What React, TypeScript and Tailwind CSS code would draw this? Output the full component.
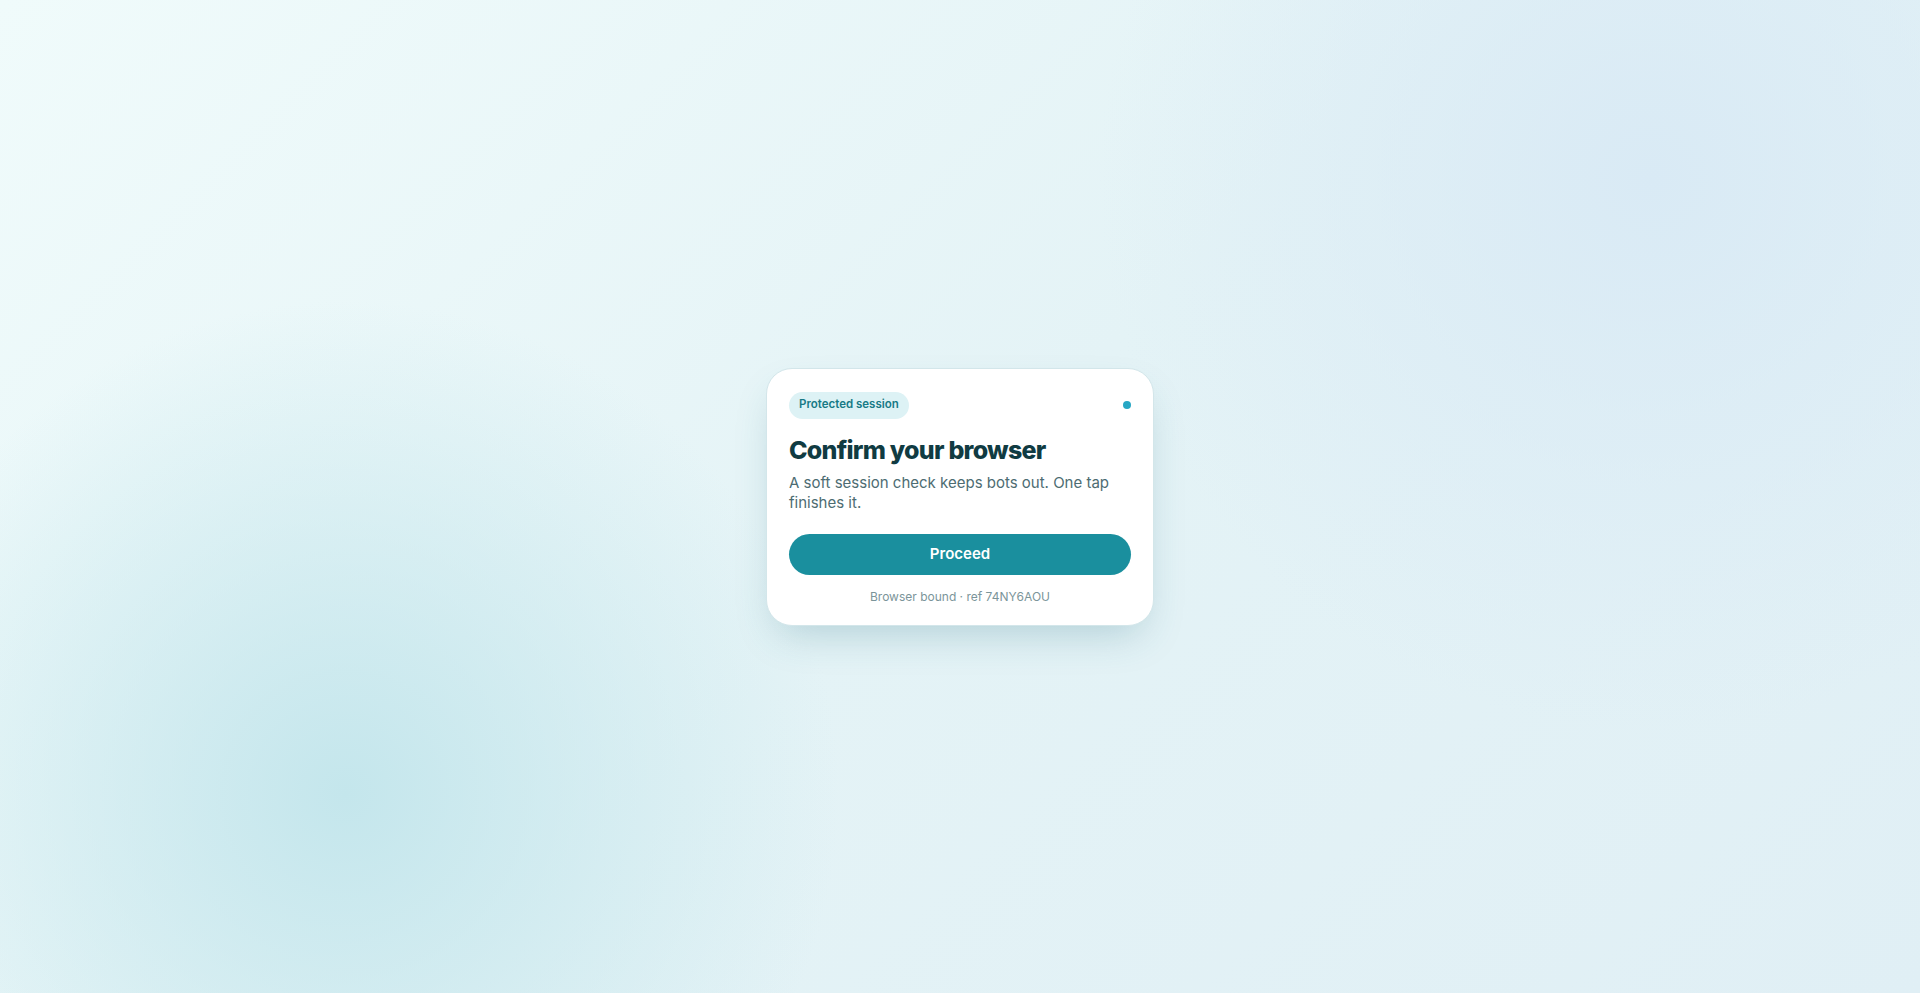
export default function App() {
    return (
        <div className="min-h-screen w-full flex items-center justify-center bg-[radial-gradient(circle_at_18%_80%,#c4e6ec_0%,rgba(196,230,236,0)_28%),radial-gradient(circle_at_86%_18%,#d9eaf5_0%,rgba(217,234,245,0)_30%),linear-gradient(135deg,#f0fbfb_0%,#e4f3f6_50%,#e0eff5_100%)] font-['Inter',sans-serif]">
            <div className="w-[388px] rounded-[26px] border border-[#d3e6ea] bg-white px-[22px] pt-[23px] pb-[19px] shadow-[0_18px_40px_-12px_rgba(40,110,130,0.28)]">
                <div className="flex items-center justify-between">
                    <span className="inline-flex h-[27px] items-center rounded-full bg-[#ddf2f5] px-[10px] text-[11.5px] font-semibold text-[#177a86]">
                        Protected session
                    </span>
                    <span className="h-2 w-2 rounded-full bg-[#27a7c4]" />
                </div>

                <h1 className="mt-[15px] text-[25px] leading-[32px] font-extrabold tracking-[-0.03em] text-[#103b42]">
                    Confirm your browser
                </h1>
                <p className="mt-[7px] text-[15px] leading-[20px] text-[#4d6c72]">
                    A soft session check keeps bots out. One tap finishes it.
                </p>

                <button className="mt-[21px] h-[41px] w-full rounded-full bg-[#1a8f9e] text-[15px] font-semibold text-white">
                    Proceed
                </button>

                <div className="mt-[13px] text-center text-[12px] leading-[18px] text-[#7b959a]">
                    Browser bound · ref 74NY6AOU
                </div>
            </div>
        </div>
    );
}
